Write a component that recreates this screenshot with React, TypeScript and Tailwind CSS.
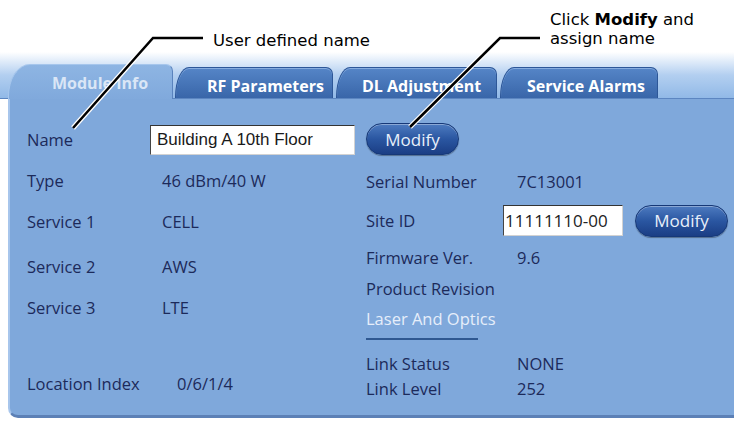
import React from "react";

const text = "text-[16.5px] leading-[22px] text-[#1c2a5a]";

function Tab({ label, className }: { label: string; className: string }) {
  return (
    <div
      className={`h-[31px] shrink-0 rounded-tl-[14px_30px] rounded-tr-[7px] border border-b-0 border-[#2d5798] bg-linear-to-b from-[#5585c7] to-[#3966a9] pt-[7px] text-[16px] font-bold leading-[22px] text-white shadow-[inset_0_1px_0_#86acdf] ${className}`}
    >
      {label}
    </div>
  );
}

function ModifyButton({ className = "" }: { className?: string }) {
  return (
    <button
      className={`h-[32px] w-[93px] shrink-0 rounded-full border border-[#163877] bg-linear-to-b from-[#4d7bc0] via-[#2a56a1] to-[#1b3e85] text-[17px] leading-none text-[#e8f0fa] shadow-[inset_0_1px_0_rgba(255,255,255,0.35),0_1px_1px_rgba(0,0,0,0.35)] ${className}`}
    >
      Modify
    </button>
  );
}

export default function App() {
  return (
    <div className="relative h-[421px] w-[734px] overflow-hidden bg-white font-['Open_Sans',sans-serif]">
      {/* callout texts */}
      <div className="flex h-[52px] items-start font-['DejaVu_Sans',sans-serif] text-[16.5px] leading-[19px] text-black">
        <div className="ml-[213px] mt-[31px] w-[337px] shrink-0">User defined name</div>
        <div className="mt-[10px]">
          Click <b>Modify</b> and
          <br />
          assign name
        </div>
      </div>

      {/* tab strip */}
      <div className="flex h-[47px] items-end border-b border-[#5c86c1] bg-linear-to-b from-white via-[#b3cff0] to-[#91b9e7] pl-[8px]">
        <div className="relative -mb-px h-[35px] w-[165px] shrink-0 rounded-tl-[22px_32px] rounded-tr-[7px] border border-b-0 border-[#a6c6ec] border-r-[#5a83bd] bg-linear-to-b from-[#8eb5e3] to-[#80a9dc] pl-[43px] pt-[7px] text-[16px] font-bold leading-[22px] text-[#dae6f6]">
          Module Info
        </div>
        <Tab label="RF Parameters" className="ml-[2px] w-[158px] pl-[31px]" />
        <Tab label="DL Adjustment" className="ml-[3px] w-[161px] pl-[25px]" />
        <Tab label="Service Alarms" className="ml-[3px] w-[158px] pl-[26px]" />
      </div>

      {/* panel body */}
      <div className="ml-[8px] grid h-[319px] grid-cols-[339px_1fr] rounded-bl-[10px] border-b-[3px] border-l-2 border-b-[#5c80b6] border-l-[#a8c6ec] bg-[#7fa8db] pl-[17px]">
        <div className="flex flex-col">
          <div className="mt-[26px] flex h-[30px] items-center">
            <span className={`w-[123px] shrink-0 ${text}`}>Name</span>
            <div className="flex h-[30px] w-[205px] items-center border border-[#d2d2d2] border-l-[#444] border-t-[#333] bg-white pl-[6px] font-['Liberation_Sans',Arial,sans-serif] text-[17px] text-[#1a1a1a]">
              Building A 10th Floor
            </div>
          </div>
          <div className="mt-[11px] flex h-[30px] items-center">
            <span className={`w-[135px] shrink-0 ${text}`}>Type</span>
            <span className={text}>46 dBm/40 W</span>
          </div>
          <div className="mt-[11px] flex h-[30px] items-center">
            <span className={`w-[135px] shrink-0 ${text}`}>Service 1</span>
            <span className={text}>CELL</span>
          </div>
          <div className="mt-[15px] flex h-[30px] items-center">
            <span className={`w-[135px] shrink-0 ${text}`}>Service 2</span>
            <span className={text}>AWS</span>
          </div>
          <div className="mt-[11px] flex h-[30px] items-center">
            <span className={`w-[135px] shrink-0 ${text}`}>Service 3</span>
            <span className={text}>LTE</span>
          </div>
          <div className="mt-[46px] flex h-[30px] items-center">
            <span className={`w-[150px] shrink-0 ${text}`}>Location Index</span>
            <span className={text}>0/6/1/4</span>
          </div>
        </div>

        <div className="flex flex-col">
          <div className="mt-[24px] flex h-[32px] items-center">
            <ModifyButton />
          </div>
          <div className="mt-[12px] flex h-[30px] items-center">
            <span className={`w-[151px] shrink-0 ${text}`}>Serial Number</span>
            <span className={text}>7C13001</span>
          </div>
          <div className="mt-[8px] flex h-[31px] items-center">
            <span className={`w-[137px] shrink-0 ${text}`}>Site ID</span>
            <div className="flex h-[31px] w-[120px] shrink-0 items-center border border-[#d2d2d2] border-l-[#444] border-t-[#333] bg-white pl-[1px] text-[17px] text-[#222]">
              11111110-00
            </div>
            <ModifyButton className="ml-[12px] h-[31px] w-[92px]" />
          </div>
          <div className="mt-[7px] flex h-[30px] items-center">
            <span className={`w-[151px] shrink-0 ${text}`}>Firmware Ver.</span>
            <span className={text}>9.6</span>
          </div>
          <div className="mt-[1px] flex h-[30px] items-center">
            <span className={text}>Product Revision</span>
          </div>
          <div className="flex h-[30px] items-center">
            <span className="text-[16.5px] leading-[22px] text-[#e6eefa]">Laser And Optics</span>
          </div>
          <div className="mt-[4px] h-[2px] w-[112px] bg-[#2f5891]" />
          <div className="mt-[12px] flex h-[24px] items-center">
            <span className={`w-[151px] shrink-0 ${text}`}>Link Status</span>
            <span className={text}>NONE</span>
          </div>
          <div className="mt-[1px] flex h-[24px] items-center">
            <span className={`w-[151px] shrink-0 ${text}`}>Link Level</span>
            <span className={text}>252</span>
          </div>
        </div>
      </div>

      {/* callout leader lines */}
      <svg className="pointer-events-none absolute inset-0" width="734" height="421" viewBox="0 0 734 421">
        <g fill="none" strokeLinejoin="miter">
          <polyline points="203,38 153,38 73,128" stroke="#fff" strokeWidth="5" />
          <polyline points="540,38 500,38 410,127" stroke="#fff" strokeWidth="5" />
          <polyline points="203,38 153,38 73,128" stroke="#000" strokeWidth="2.5" />
          <polyline points="540,38 500,38 410,127" stroke="#000" strokeWidth="2.5" />
        </g>
      </svg>
    </div>
  );
}
